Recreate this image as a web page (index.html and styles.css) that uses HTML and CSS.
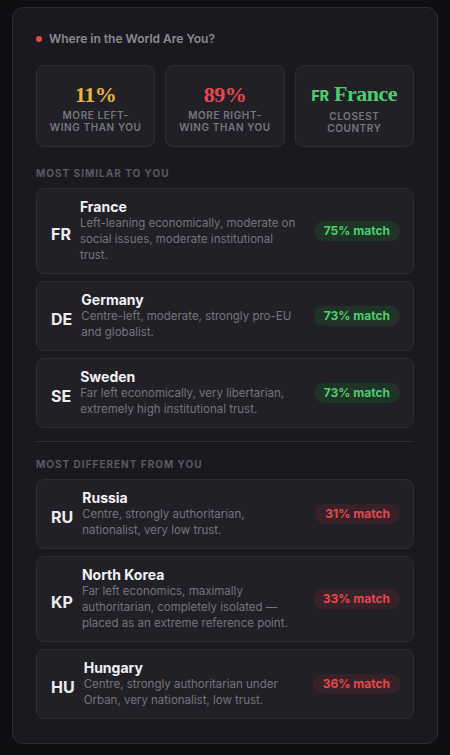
FILE: index.html
```html
<!DOCTYPE html>
<html lang="en">
<head>
    <meta charset="UTF-8">
    <meta name="viewport" content="width=device-width, initial-scale=1.0">
    <title>Where in the World Are You?</title>
    <link rel="stylesheet" href="styles.css">
</head>
<body>
    <div class="panel">
        <div class="panel-title"><span class="dot"></span>Where in the World Are You?</div>

        <div class="stats">
            <div class="stat">
                <div class="stat-value yellow">11%</div>
                <div class="stat-label">More left-<br>wing than you</div>
            </div>
            <div class="stat">
                <div class="stat-value red">89%</div>
                <div class="stat-label">More right-<br>wing than you</div>
            </div>
            <div class="stat">
                <div class="stat-value green"><span class="flag-code">FR</span>France</div>
                <div class="stat-label">Closest<br>country</div>
            </div>
        </div>

        <div class="section-label">Most similar to you</div>
        <div class="country-list">
            <div class="country">
                <div class="code">FR</div>
                <div class="info">
                    <div class="name">France</div>
                    <div class="desc">Left-leaning economically, moderate on social issues, moderate institutional trust.</div>
                </div>
                <div class="badge good">75% match</div>
            </div>
            <div class="country">
                <div class="code">DE</div>
                <div class="info">
                    <div class="name">Germany</div>
                    <div class="desc">Centre-left, moderate, strongly pro-EU and globalist.</div>
                </div>
                <div class="badge good">73% match</div>
            </div>
            <div class="country">
                <div class="code">SE</div>
                <div class="info">
                    <div class="name">Sweden</div>
                    <div class="desc">Far left economically, very libertarian, extremely high institutional trust.</div>
                </div>
                <div class="badge good">73% match</div>
            </div>
        </div>

        <hr class="divider">

        <div class="section-label">Most different from you</div>
        <div class="country-list">
            <div class="country">
                <div class="code">RU</div>
                <div class="info">
                    <div class="name">Russia</div>
                    <div class="desc">Centre, strongly authoritarian, nationalist, very low trust.</div>
                </div>
                <div class="badge bad">31% match</div>
            </div>
            <div class="country">
                <div class="code">KP</div>
                <div class="info">
                    <div class="name">North Korea</div>
                    <div class="desc">Far left economics, maximally authoritarian, completely isolated — placed as an extreme reference point.</div>
                </div>
                <div class="badge bad">33% match</div>
            </div>
            <div class="country">
                <div class="code">HU</div>
                <div class="info">
                    <div class="name">Hungary</div>
                    <div class="desc">Centre, strongly authoritarian under Orban, very nationalist, low trust.</div>
                </div>
                <div class="badge bad">36% match</div>
            </div>
        </div>
    </div>
</body>
</html>
```

FILE: styles.css
```css
body {
    background-color: #0f0f12;
    font-family: 'Inter', 'Noto Sans', sans-serif;
    margin: 0;
    padding: 7px 12px 11px;
}

.panel {
    background-color: #1a191f;
    border: 1px solid #2c2b32;
    border-radius: 11px;
    padding: 23px 23px 24px;
}

.panel-title {
    display: flex;
    align-items: center;
    gap: 7px;
    color: #8b8a92;
    font-size: 12px;
    font-weight: 600;
    line-height: 16px;
}

.dot {
    width: 6px;
    height: 6px;
    border-radius: 50%;
    background-color: #e5484d;
}

.stats {
    display: grid;
    grid-template-columns: repeat(3, 1fr);
    gap: 10px;
    margin-top: 18px;
    margin-bottom: 18px;
}

.stat {
    background-color: #212027;
    border: 1px solid #2e2d34;
    border-radius: 8px;
    display: flex;
    flex-direction: column;
    align-items: center;
    justify-content: center;
    text-align: center;
    padding-top: 4px;
    box-sizing: border-box;
    height: 82px;
}

.stat-value {
    font-family: 'Liberation Serif', 'DejaVu Serif', serif;
    font-weight: bold;
    font-size: 22px;
    line-height: 24px;
    letter-spacing: -0.5px;
    display: flex;
    align-items: baseline;
    gap: 5px;
}

.flag-code {
    font-family: 'Inter', sans-serif;
    font-size: 14px;
    font-weight: 800;
    letter-spacing: 0;
}

.yellow { color: #e3b541; }
.red { color: #e5484d; }
.green { color: #4cce70; }

.stat-label {
    color: #78777f;
    font-size: 10px;
    font-weight: 600;
    letter-spacing: 0.6px;
    text-transform: uppercase;
    line-height: 12px;
    margin-top: 2px;
}

.section-label {
    color: #5a5960;
    font-size: 10px;
    font-weight: 700;
    letter-spacing: 1px;
    text-transform: uppercase;
    line-height: 16px;
    margin-bottom: 7px;
}

.country-list {
    display: flex;
    flex-direction: column;
    gap: 7px;
}

.country {
    display: flex;
    align-items: center;
    background-color: #212027;
    border: 1px solid #2e2d34;
    border-radius: 8px;
    padding: 10px 13px 10px 14px;
}

.code {
    color: #ececef;
    font-size: 16px;
    font-weight: 700;
    margin-top: 6px;
    margin-right: 9px;
}

.info {
    flex: 1;
    max-width: 219px;
}

.name {
    color: #f2f2f4;
    font-size: 14px;
    font-weight: 700;
    line-height: 16px;
}

.desc {
    color: #75747c;
    font-size: 11.5px;
    line-height: 16px;
}

.badge {
    margin-left: auto;
    font-size: 12px;
    font-weight: 700;
    padding: 3px 10px;
    border-radius: 10px;
    line-height: 14px;
}

.badge.good {
    background-color: #1f3326;
    color: #4cce70;
}

.badge.bad {
    background-color: #38222a;
    color: #e5484d;
}

.divider {
    border: none;
    border-top: 1px solid #2e2d34;
    margin: 13px 0 14px;
}
```
